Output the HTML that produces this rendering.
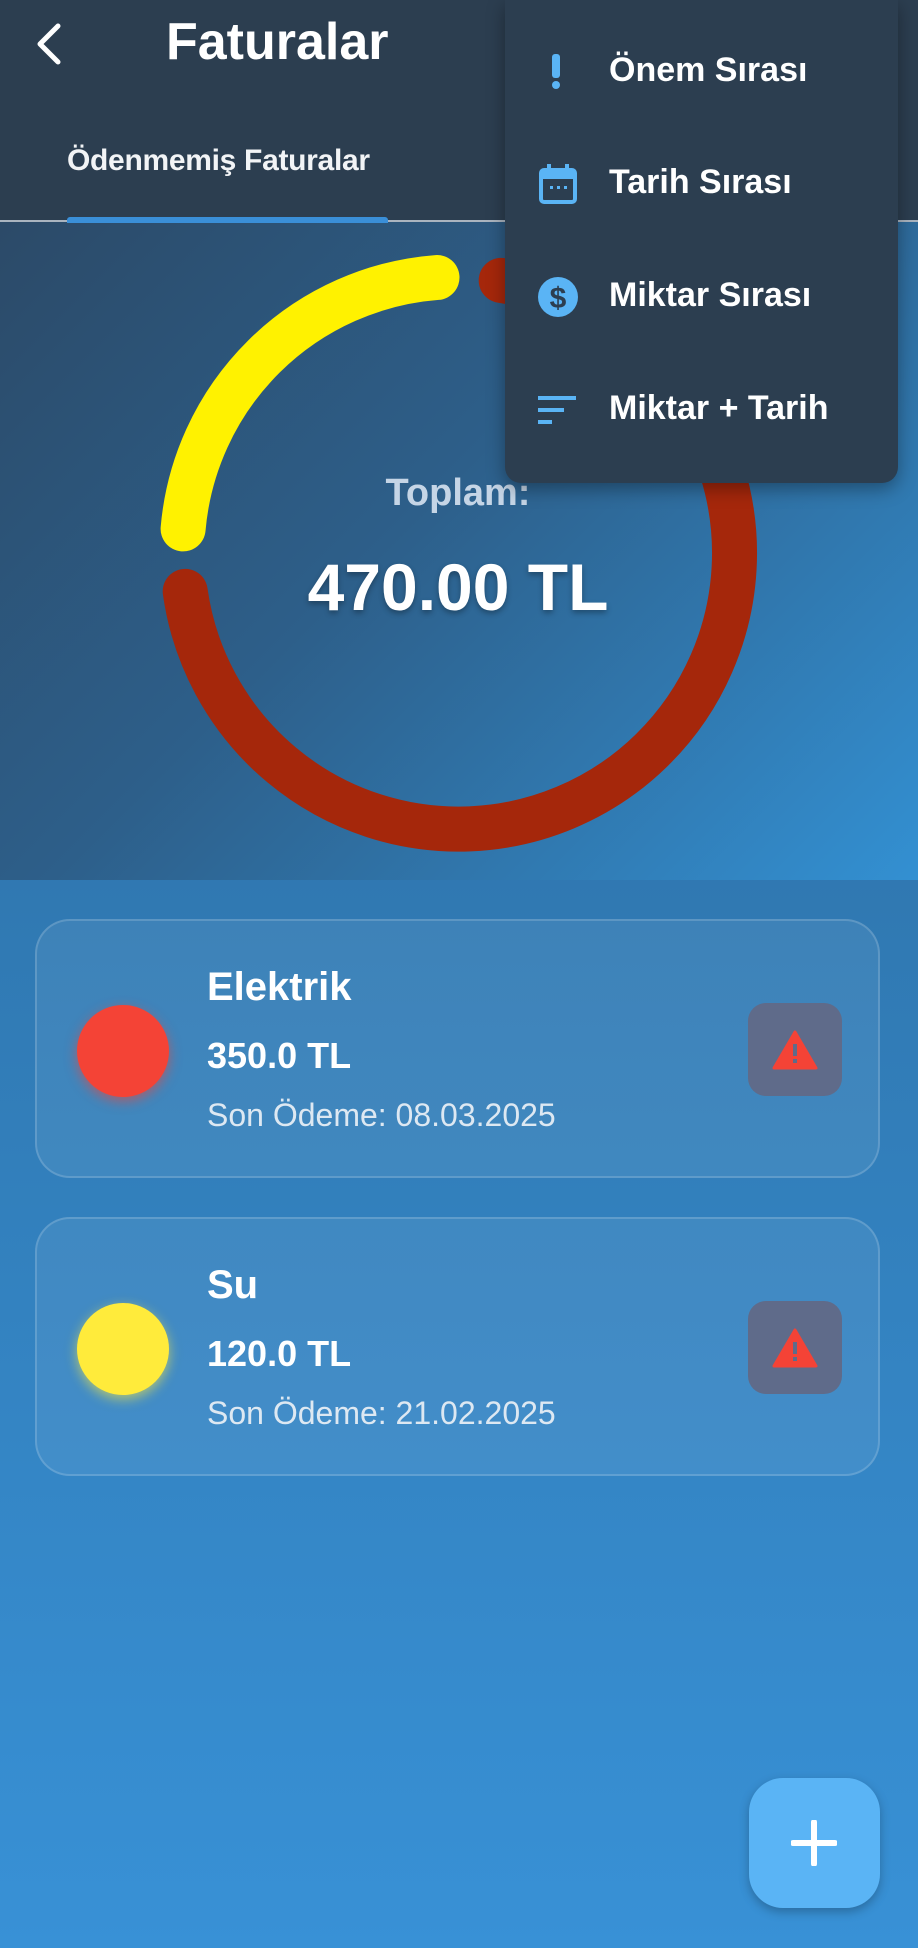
<!DOCTYPE html>
<html><head><meta charset="utf-8"><style>
*{margin:0;padding:0;box-sizing:border-box}
body{width:918px;height:1948px;overflow:hidden;font-family:"Liberation Sans",sans-serif;background:linear-gradient(180deg,#2c6592 0%,#2f76ae 40%,#3891d6 100%);position:relative;color:#fff}
.hdr{position:absolute;left:0;top:0;width:918px;height:222px;background:#2c3e50;border-bottom:2px solid #aab4bf}
.top{position:absolute;left:0;top:222px;width:918px;height:658px;background:linear-gradient(135deg,#2c4a68 0%,#2d5f8a 45%,#3390d2 100%)}
.title{position:absolute;left:166px;top:12px;font-size:52px;font-weight:bold}
.tab{position:absolute;left:67px;top:144px;font-size:30px;font-weight:bold;color:#f2f4f6;letter-spacing:-0.3px}
.ind{position:absolute;left:67px;top:217px;width:321px;height:6px;background:#3a8fd8;border-radius:3px 3px 0 0}
.menu{position:absolute;left:505px;top:0;width:393px;height:483px;background:#2c3e50;border-radius:0 0 16px 16px;box-shadow:0 6px 18px rgba(0,0,0,.35)}
.mi{position:absolute;left:104px;font-size:34px;font-weight:bold;color:#fff}
.card{position:absolute;left:35px;width:845px;height:259px;border-radius:35px;border:2px solid rgba(255,255,255,.16);background:rgba(255,255,255,.07)}
.dot{position:absolute;left:40px;top:84px;width:92px;height:92px;border-radius:50%}
.nm{position:absolute;left:170px;top:44px;font-size:40px;font-weight:bold}
.am{position:absolute;left:170px;top:114px;font-size:36px;font-weight:bold}
.dt{position:absolute;left:170px;top:176px;font-size:32px;color:#dde8f2}
.warn{position:absolute;left:711px;top:82px;width:94px;height:93px;border-radius:18px;background:#5f6b8a}
.fab{position:absolute;left:749px;top:1778px;width:131px;height:130px;border-radius:34px;background:#5ab4f5;box-shadow:0 4px 10px rgba(0,0,0,.25)}
</style></head><body>
<div class="top"></div>
<svg style="position:absolute;left:0;top:0" width="918" height="900">
<path d="M501.2 280.4 A276 276 0 1 1 185.2 591.4" fill="none" stroke="#a5270b" stroke-width="45" stroke-linecap="round"/>
<path d="M183.1 528.9 A276 276 0 0 1 437 277.5" fill="none" stroke="#fff200" stroke-width="45" stroke-linecap="round"/>
<text x="458" y="505" text-anchor="middle" font-family="Liberation Sans" font-weight="bold" font-size="38" fill="#c5d5e6">Toplam:</text>
<text x="458" y="610" text-anchor="middle" font-family="Liberation Sans" font-weight="bold" font-size="66" fill="#fff" style="text-shadow:0 3px 6px rgba(0,0,0,.3)">470.00 TL</text>
</svg>
<div class="hdr">
<svg style="position:absolute;left:32px;top:22px" width="34" height="44"><path d="M26 4 L8 22 L26 40" fill="none" stroke="#fff" stroke-width="5" stroke-linecap="round" stroke-linejoin="round"/></svg>
<div class="title">Faturalar</div>
<div class="tab">Ödenmemiş Faturalar</div>
<div class="ind"></div>
</div>
<div class="menu">
<svg style="position:absolute;left:36px;top:52px" width="30" height="40"><rect x="11" y="2" width="8" height="24" rx="3" fill="#5ab4f5"/><circle cx="15" cy="33" r="4" fill="#5ab4f5"/></svg>
<div class="mi" style="top:51px">Önem Sırası</div>
<svg style="position:absolute;left:33px;top:164px" width="40" height="40"><rect x="3" y="6" width="34" height="32" rx="3" fill="none" stroke="#5ab4f5" stroke-width="4"/><rect x="3" y="6" width="34" height="9" fill="#5ab4f5"/><rect x="9" y="0" width="4" height="8" fill="#5ab4f5"/><rect x="27" y="0" width="4" height="8" fill="#5ab4f5"/><rect x="12" y="22" width="3" height="3" fill="#5ab4f5"/><rect x="19" y="22" width="3" height="3" fill="#5ab4f5"/><rect x="26" y="22" width="3" height="3" fill="#5ab4f5"/></svg>
<div class="mi" style="top:163px">Tarih Sırası</div>
<svg style="position:absolute;left:32px;top:276px" width="42" height="42"><circle cx="21" cy="21" r="20" fill="#5ab4f5"/><text x="21" y="32" text-anchor="middle" font-family="Liberation Sans" font-weight="bold" font-size="30" fill="#2c3e50">$</text></svg>
<div class="mi" style="top:276px">Miktar Sırası</div>
<svg style="position:absolute;left:33px;top:394px" width="40" height="34"><rect x="0" y="2" width="38" height="4" fill="#5ab4f5"/><rect x="0" y="14" width="26" height="4" fill="#5ab4f5"/><rect x="0" y="26" width="14" height="4" fill="#5ab4f5"/></svg>
<div class="mi" style="top:389px">Miktar + Tarih</div>
</div>
<div class="card" style="top:919px">
<div class="dot" style="background:#f44336;box-shadow:0 4px 12px rgba(244,67,54,.6)"></div>
<div class="nm">Elektrik</div><div class="am">350.0 TL</div><div class="dt">Son Ödeme: 08.03.2025</div>
<div class="warn"><svg style="position:absolute;left:24px;top:27px" width="46" height="40"><path d="M23 2 L44 38 L2 38 Z" fill="#f44336" stroke="#f44336" stroke-width="3" stroke-linejoin="round"/><rect x="21" y="14" width="4" height="12" fill="#5f6b8a"/><rect x="21" y="29" width="4" height="4" fill="#5f6b8a"/></svg></div>
</div>
<div class="card" style="top:1217px">
<div class="dot" style="background:#ffeb3b;box-shadow:0 4px 12px rgba(255,235,59,.6)"></div>
<div class="nm">Su</div><div class="am">120.0 TL</div><div class="dt">Son Ödeme: 21.02.2025</div>
<div class="warn"><svg style="position:absolute;left:24px;top:27px" width="46" height="40"><path d="M23 2 L44 38 L2 38 Z" fill="#f44336" stroke="#f44336" stroke-width="3" stroke-linejoin="round"/><rect x="21" y="14" width="4" height="12" fill="#5f6b8a"/><rect x="21" y="29" width="4" height="4" fill="#5f6b8a"/></svg></div>
</div>
<div class="fab"><svg style="position:absolute;left:42px;top:42px" width="46" height="46"><path d="M23 2 V44 M2 23 H44" stroke="#fff" stroke-width="6" stroke-linecap="round"/></svg></div>
</body></html>
